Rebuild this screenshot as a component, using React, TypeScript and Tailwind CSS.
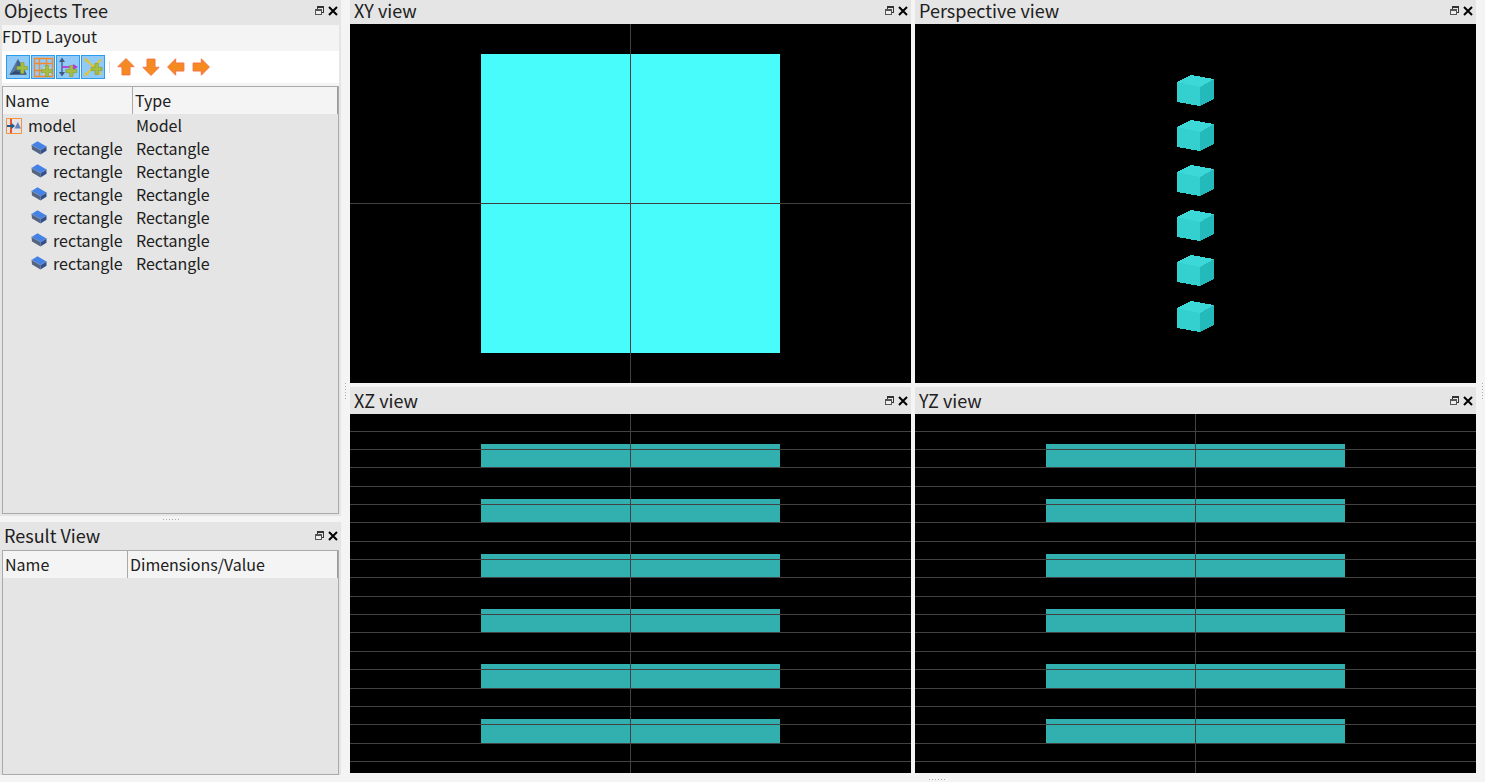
import React from "react";

const objects = ["rectangle", "rectangle", "rectangle", "rectangle", "rectangle", "rectangle"];

function TitleBar({ title, className = "" }: { title: string; className?: string }) {
  return (
    <header className={`flex shrink-0 items-start justify-between bg-[#e5e5e5] pl-1 ${className}`}>
      <h2 className="text-[18px] leading-[21px]">{title}</h2>
      <div className="flex h-[22px] items-center gap-1 pr-[3px]">
        <button type="button" aria-label={`Float ${title}`} className="size-[10px]">
          <svg viewBox="0 0 10 10" className="block size-[10px]" shapeRendering="crispEdges">
            <path d="M3 0h7v2H3zM9 2h1v4H9zM3 2h1v1H3zM8 6h2v1H8z" fill="#333" />
            <path d="M1 3h7v2H1zM1 5h1v4H1zM7 5h1v4H7zM1 8h7v1H1z" fill="#555" />
            <path d="M2 5h5v3H2z" fill="#eee" />
          </svg>
        </button>
        <button type="button" aria-label={`Close ${title}`} className="size-[10px]">
          <svg viewBox="0 0 10 10" className="block size-[10px]">
            <path d="M1 1l8 8M9 1l-8 8" stroke="#000" strokeWidth="2" />
          </svg>
        </button>
      </div>
    </header>
  );
}

function Plus({ x, y }: { x: number; y: number }) {
  return (
    <path
      transform={`translate(${x} ${y})`}
      d="M-1.700-5.500h3.400v3.800h3.800v3.400H1.700v3.800h-3.400V1.700h-3.800v-3.400h3.800z"
      fill="#a5bd43"
      stroke="#829c35"
      strokeWidth=".6"
    />
  );
}

function StructuresIcon() {
  return (
    <svg viewBox="0 0 22 22" className="size-[22px]">
      <path d="M11 3L20 18.500H2.500z" fill="#41618f" />
      <path d="M11 3L2.500 18.500h5z" fill="#5c799f" />
      <path d="M2.500 18.500L8 15l12 3.500z" fill="#304a73" />
      <Plus x={15.3} y={12} />
    </svg>
  );
}

function MeshIcon() {
  return (
    <svg viewBox="0 0 22 22" className="size-[22px]">
      <path d="M2.500 2.500h18v18h-18zM7.500 2.500v18M14.500 2.500v18M2.500 7.500h18M2.500 14.500h18" fill="none" stroke="#f58a2c" strokeWidth="1.300" />
      <circle cx="15" cy="15" r="5" fill="#f6dfa9" opacity=".7" />
      <Plus x={15} y={15} />
    </svg>
  );
}

function SourceIcon() {
  return (
    <svg viewBox="0 0 22 22" className="size-[22px]">
      <path d="M5 4v14" stroke="#405a87" strokeWidth="1.300" />
      <path d="M5 1.500L8 6H2zM5 20.500L2 16h6z" fill="#405a87" />
      <path d="M5 11h12" stroke="#b735d9" strokeWidth="1.700" />
      <path d="M16 8l5 3-5 3z" fill="#b735d9" />
      <Plus x={14.3} y={15} />
    </svg>
  );
}

function MonitorIcon() {
  return (
    <svg viewBox="0 0 22 22" className="size-[22px]">
      <path d="M4 3.500l15 15M19 3.500L4 18.500" stroke="#e2c52d" strokeWidth="2" />
      <path d="M2.500 2l4 1.500-3 3zM2.500 20l1-4 3 3z" fill="#e2c52d" />
      <Plus x={14.7} y={13} />
    </svg>
  );
}

function ArrowIcon({ turn }: { turn: string }) {
  return (
    <svg viewBox="0 0 18 18" className={`size-[18px] ${turn}`}>
      <path d="M9 .6L17.200 8.700H13v8.200H5V8.700H.8z" fill="#f58a20" stroke="#f47247" strokeWidth="1" />
    </svg>
  );
}

function ModelIcon() {
  return (
    <svg viewBox="0 0 16 16" className="block size-4">
      <path d="M.5.5h15v15H.5z" fill="#e4e3e5" stroke="#f5923c" />
      <path d="M5 1v14" stroke="#ee542a" strokeWidth="2" />
      <path d="M1 8h5" stroke="#185b8c" strokeWidth="2" />
      <path d="M5.500 5L9 8l-3.500 3z" fill="#185b8c" />
      <path d="M11.800 4l3.200 6.500H8.500z" fill="#6583c0" />
    </svg>
  );
}

function BlockIcon() {
  return (
    <svg viewBox="0 0 16 16" className="block size-4">
      <path d="M.5 4l6-3.700 9 5.200-6 3.500z" fill="#4582e5" />
      <path d="M.5 4l9 5v4.500L1 8.500z" fill="#56657f" />
      <path d="M9.500 9l6-3.500v4.300l-6 3.700z" fill="#34508c" />
      <path d="M.5 4l9 5 6-3.500" fill="none" stroke="#7593c9" strokeWidth=".6" />
    </svg>
  );
}

function ToolButton({ label, children }: { label: string; children: React.ReactNode }) {
  return (
    <button type="button" aria-label={label} aria-pressed="true" className="flex size-6 items-center justify-center border border-[#2c9cef] bg-[#91c9f7]">
      {children}
    </button>
  );
}

function MoveButton({ label, turn }: { label: string; turn: string }) {
  return (
    <button type="button" aria-label={label} className="flex size-6 items-center justify-center">
      <ArrowIcon turn={turn} />
    </button>
  );
}

function HeadRow({ first, second, width }: { first: string; second: string; width: string }) {
  return (
    <thead>
      <tr className="h-[27px] bg-[#f4f4f4] text-left">
        <th scope="col" className={`${width} border-r border-[#aaa] p-0 pl-[2px] font-normal`}>{first}</th>
        <th scope="col" className="border-r border-[#999] p-0 pl-[2px] font-normal">{second}</th>
      </tr>
    </thead>
  );
}

function Canvas({ label, children }: { label: string; children: React.ReactNode }) {
  return (
    <div className="relative min-h-[200px] flex-1 overflow-hidden bg-black">
      <svg role="img" aria-label={label} viewBox="0 0 561 359" preserveAspectRatio="xMidYMid slice" className="absolute inset-0 size-full" shapeRendering="crispEdges">
        {children}
      </svg>
    </div>
  );
}

function SideView({ label }: { label: string }) {
  const lines = [17, 35, 53, 72, 90, 108, 127, 145, 163, 182, 200, 218, 237, 255, 274, 292, 310, 329, 347];
  const bars = [30, 85, 140, 195, 250, 305];
  return (
    <Canvas label={label}>
      {bars.map((y) => <rect key={y} x="131" y={y} width="299" height={y > 240 ? 24 : 23} fill="#32b0b0" />)}
      {lines.map((y) => <rect key={y} x="-600" y={y} width="1800" height="1" fill="#424242" />)}
      <rect x="280" y="-400" width="1" height="1200" fill="#424242" />
    </Canvas>
  );
}

export default function App() {
  return (
    <div className="flex min-h-screen bg-[#f4f4f4] font-['Noto_Sans_CJK_SC',sans-serif] text-[16px] leading-[23px] text-[#202020]">
      <aside className="flex w-[341px] shrink-0 flex-col pb-[7px]">
        <section className="flex flex-[516] flex-col bg-[#e5e5e5]">
          <TitleBar title="Objects Tree" className="h-[25px]" />
          <div className="mr-[2px] ml-[2px] bg-[#f4f4f4] pb-[3px]">
            <h3 className="h-[26px]">FDTD Layout</h3>
            <div role="toolbar" aria-label="Object tools" className="flex h-8 items-center gap-px bg-white pl-1">
              <ToolButton label="Add structure"><StructuresIcon /></ToolButton>
              <ToolButton label="Add mesh"><MeshIcon /></ToolButton>
              <ToolButton label="Add source"><SourceIcon /></ToolButton>
              <ToolButton label="Add monitor"><MonitorIcon /></ToolButton>
              <span className="mx-[3px] h-3 w-px bg-[#ddd]" />
              <MoveButton label="Move up" turn="rotate-0" />
              <MoveButton label="Move down" turn="rotate-180" />
              <MoveButton label="Move left" turn="-rotate-90" />
              <MoveButton label="Move right" turn="rotate-90" />
            </div>
          </div>
          <div className="mr-[2px] mb-[2px] ml-[2px] flex-1 border border-[#aaa]">
            <table className="w-full table-fixed border-separate border-spacing-0">
              <HeadRow first="Name" second="Type" width="w-[130px]" />
              <tbody>
                <tr className="h-[23px]">
                  <td className="p-0">
                    <div className="flex items-center gap-[6px] pl-[3px]"><ModelIcon />model</div>
                  </td>
                  <td className="p-0 pl-[3px]">Model</td>
                </tr>
                {objects.map((name, i) => (
                  <tr key={i} className="h-[23px]">
                    <td className="p-0">
                      <div className="flex items-center gap-[6px] pl-7"><BlockIcon />{name}</div>
                    </td>
                    <td className="p-0 pl-[3px]">Rectangle</td>
                  </tr>
                ))}
              </tbody>
            </table>
          </div>
        </section>
        <div className="flex h-[6px] items-center justify-center gap-[2px]">
          {[0, 1, 2, 3, 4, 5].map((n) => <i key={n} className="size-px bg-[#aaa]" />)}
        </div>
        <section className="flex flex-[253] flex-col bg-[#e5e5e5]">
          <TitleBar title="Result View" className="h-7 pt-[3px]" />
          <div className="mr-[2px] ml-[2px] flex-1 border border-[#aaa]">
            <table className="w-full table-fixed border-separate border-spacing-0">
              <HeadRow first="Name" second="Dimensions/Value" width="w-[125px]" />
            </table>
          </div>
        </section>
      </aside>

      <div className="flex w-[9px] shrink-0 flex-col items-center justify-center gap-[2px]">
        {[0, 1, 2, 3, 4, 5].map((n) => <i key={n} className="size-px bg-[#aaa]" />)}
      </div>

      <div className="flex min-w-0 flex-1 flex-col">
        <main className="grid flex-1 grid-cols-2 grid-rows-[383fr_386fr] gap-1">
          <section className="flex flex-col">
            <TitleBar title="XY view" className="h-6" />
            <Canvas label="XY view">
              <rect x="131" y="30" width="299" height="299" fill="#48fcfc" />
              <path d="M-600 179h1800v1H-600zM280-400h1V800h-1z" fill="#404040" />
            </Canvas>
          </section>
          <section className="flex flex-col">
            <TitleBar title="Perspective view" className="h-6" />
            <Canvas label="Perspective view">
              {[51, 96, 141, 186, 231, 277].map((y) => (
                <g key={y} transform={`translate(262 ${y})`}>
                  <path d="M0 7L14 0l23 4-14 8z" fill="#3cd8d8" />
                  <path d="M0 7l23 5v19L0 27z" fill="#34cfcf" />
                  <path d="M23 12l14-8v20l-14 7z" fill="#24b9ba" />
                </g>
              ))}
            </Canvas>
          </section>
          <section className="flex flex-col">
            <TitleBar title="XZ view" className="h-[27px] pt-[3px]" />
            <SideView label="XZ view" />
          </section>
          <section className="flex flex-col">
            <TitleBar title="YZ view" className="h-[27px] pt-[3px]" />
            <SideView label="YZ view" />
          </section>
        </main>
        <div className="flex h-[9px] shrink-0 items-center justify-center gap-[2px] pt-1 pl-12">
          {[0, 1, 2, 3, 4, 5].map((n) => <i key={n} className="size-px bg-[#aaa]" />)}
        </div>
      </div>

      <div className="flex w-[9px] shrink-0 flex-col items-center justify-center gap-[2px] pl-1">
        {[0, 1, 2, 3, 4, 5].map((n) => <i key={n} className="size-px bg-[#aaa]" />)}
      </div>
    </div>
  );
}
